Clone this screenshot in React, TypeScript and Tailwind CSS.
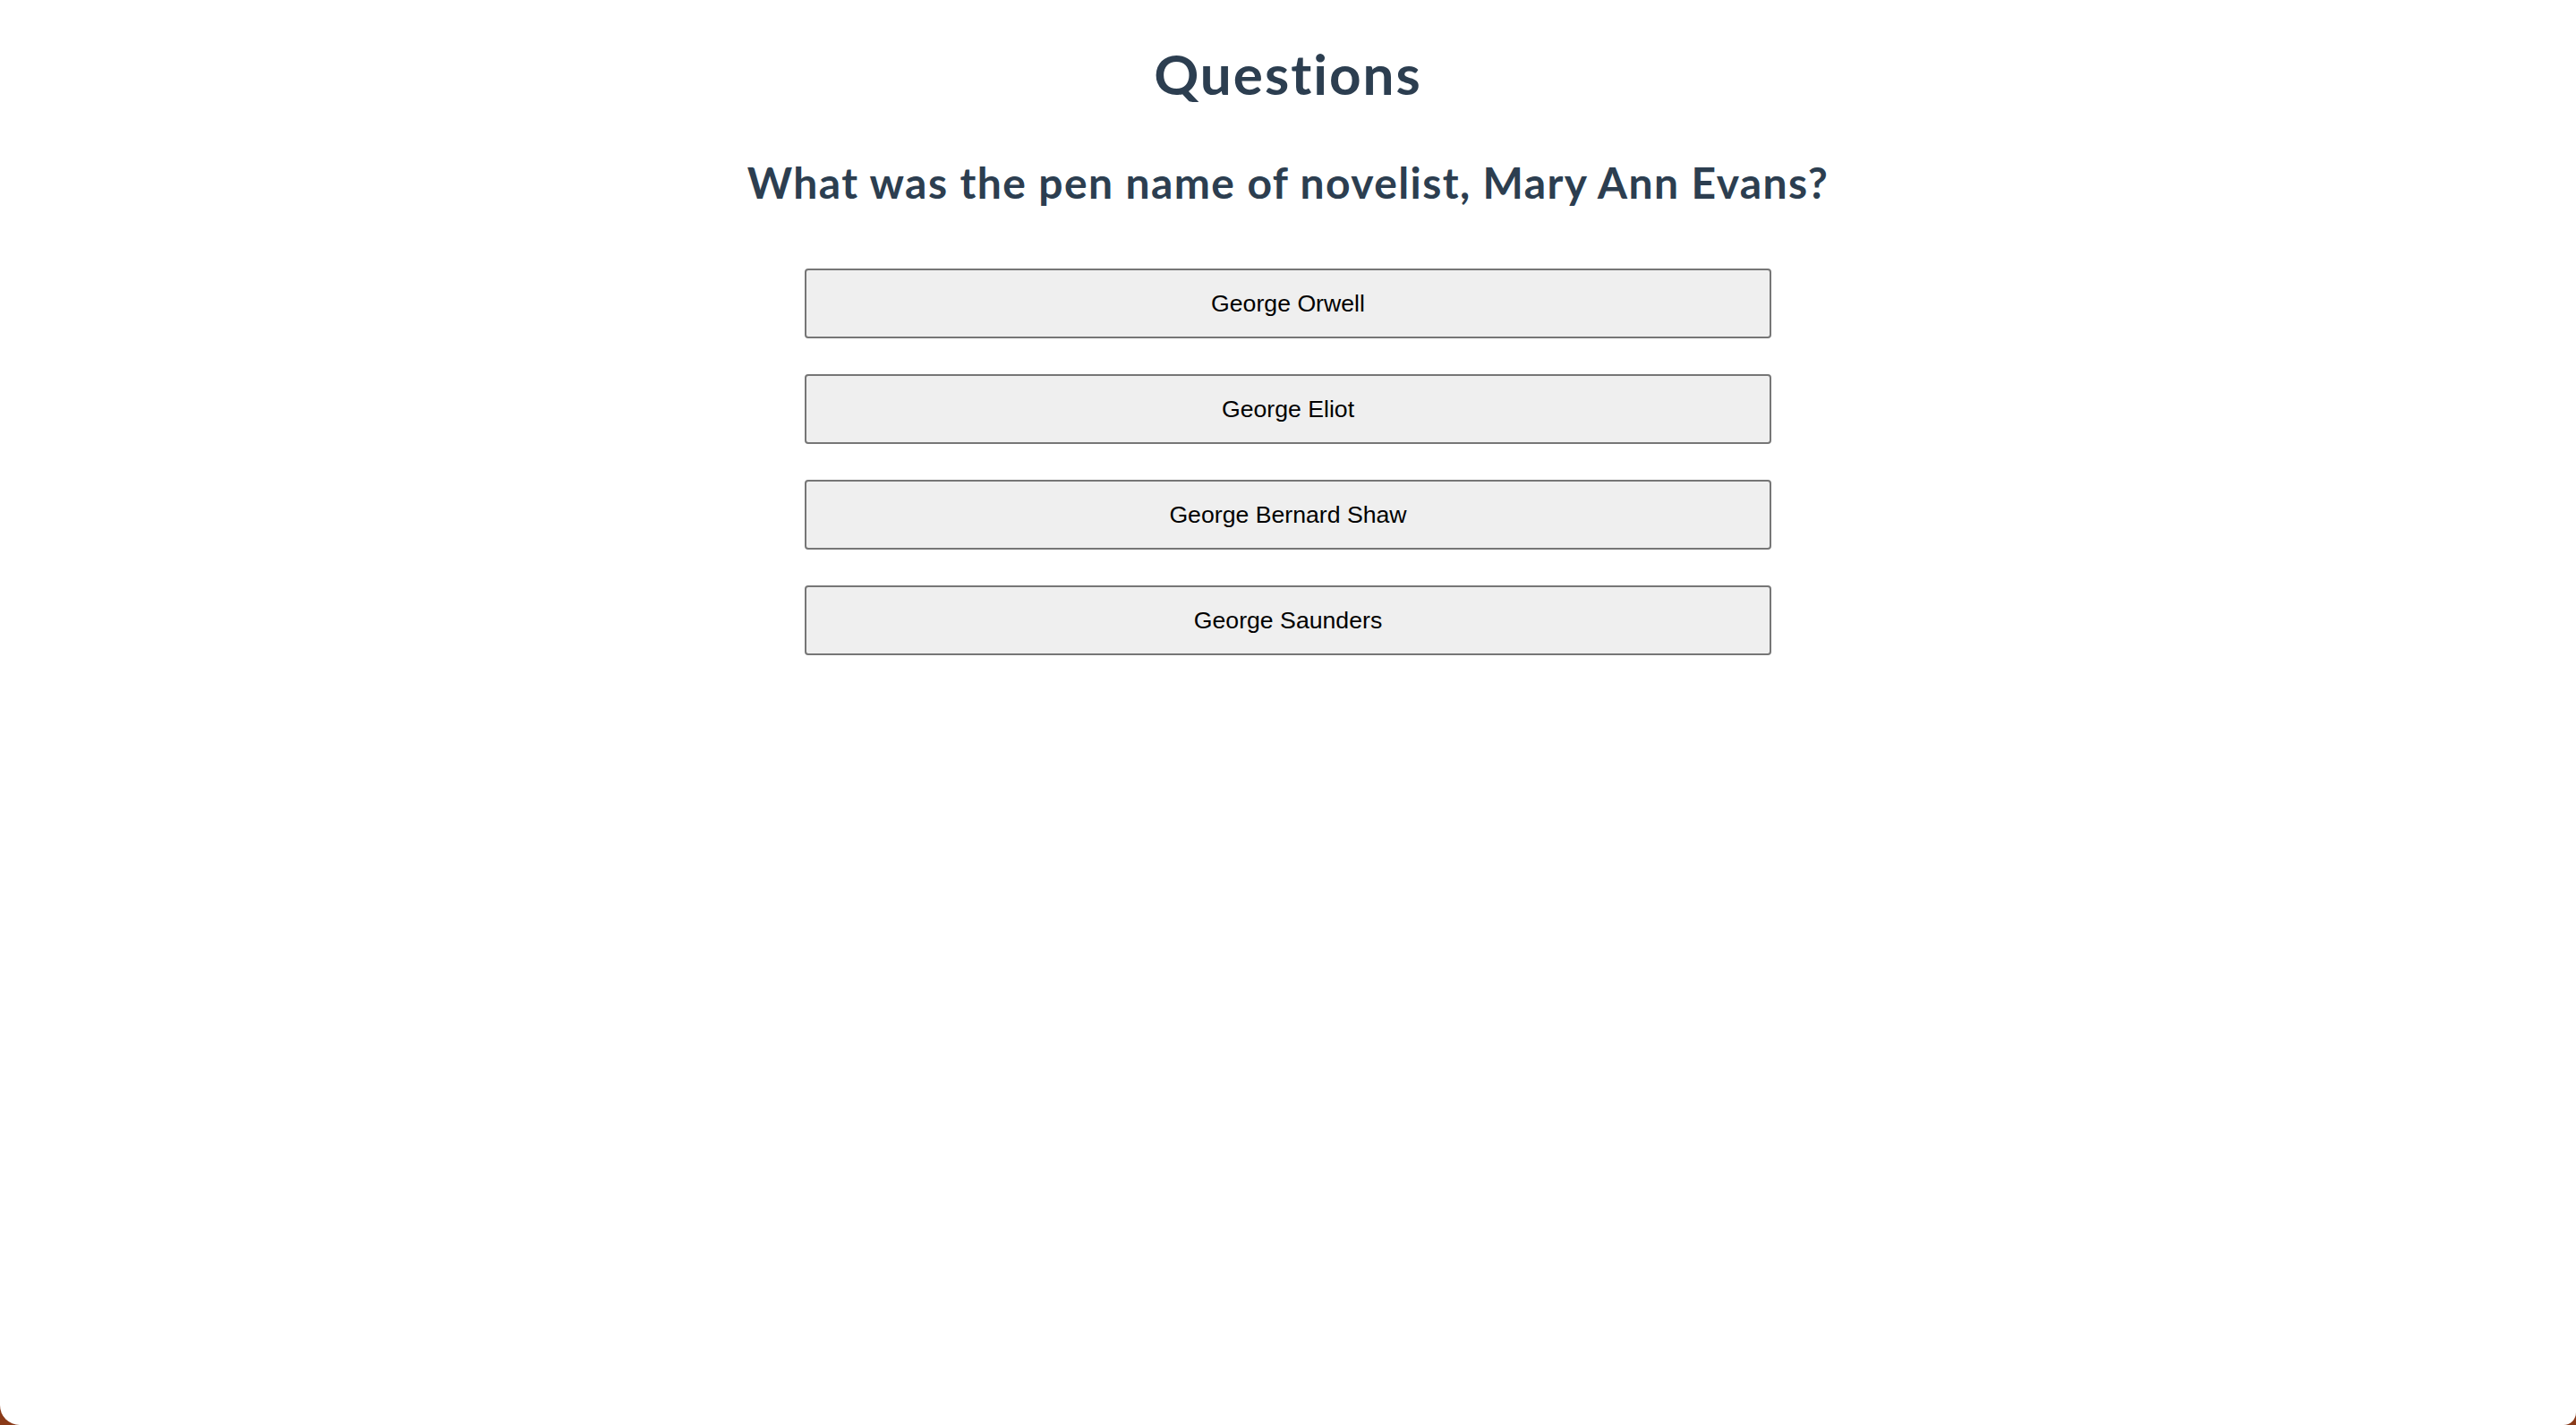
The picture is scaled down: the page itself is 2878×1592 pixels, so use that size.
const answers = [
	"George Orwell",
	"George Eliot",
	"George Bernard Shaw",
	"George Saunders",
];

export default function App() {
	return (
		<div className="h-screen bg-[#8a3a18]">
			<div
				className="h-full rounded-br-[14px] rounded-bl-[22px] bg-white text-center text-[#2c3e50] [font-variant-ligatures:none]"
				style={{ fontFamily: "Lato, 'Open Sans', sans-serif" }}
			>
				<h1 className="pt-[45px] text-[62px] leading-[1.2] font-bold tracking-[2px]">
					Questions
				</h1>
				<h2 className="mt-[56px] text-[48px] leading-[1.2] font-bold tracking-[1.4px]">
					What was the pen name of novelist, Mary Ann Evans?
				</h2>
				<div className="mt-[67px] flex flex-col items-center gap-[40px]">
					{answers.map((a) => (
						<button
							key={a}
							type="button"
							className="h-[78px] w-[1080px] rounded-[4px] border-2 border-[#767676] bg-[#efefef] text-[26.67px] tracking-normal text-black"
							style={{ fontFamily: "'Liberation Sans', Arial, sans-serif" }}
						>
							{a}
						</button>
					))}
				</div>
			</div>
		</div>
	);
}
